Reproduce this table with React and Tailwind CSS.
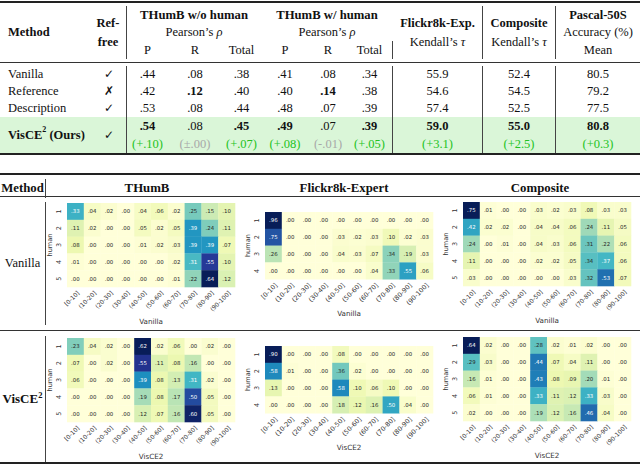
import clsx from 'clsx'

// top table columns: method | ref-free | thumb w/o (P R Total) | thumb w/ (P R Total) | flickr | composite | pascal
const COLS = 'grid grid-cols-[90px_37px_41px_54px_39px_48px_38px_46px_90px_73px_84px]'
const LINE = 'border-r border-[#444]'

const rows = [
  { name: 'Vanilla', ref: '✓', vals: ['.44', '.08', '.38', '.41', '.08', '.34', '55.9', '52.4', '80.5'], bold: [] },
  { name: 'Reference', ref: '✗', vals: ['.42', '.12', '.40', '.40', '.14', '.38', '54.6', '54.5', '79.2'], bold: [1, 4] },
  { name: 'Description', ref: '✓', vals: ['.53', '.08', '.44', '.48', '.07', '.39', '57.4', '52.5', '77.5'], bold: [] },
]

const ours = ['.54', '.08', '.45', '.49', '.07', '.39', '59.0', '55.0', '80.8']
const oursBold = [0, 2, 3, 5, 6, 7, 8]
const deltas = ['(+.10)', '(±.00)', '(+.07)', '(+.08)', '(-.01)', '(+.05)', '(+3.1)', '(+2.5)', '(+0.3)']

const YLGNBU = ['#ffffd9', '#edf8b1', '#c7e9b4', '#7fcdbb', '#41b6c4', '#1d91c0', '#225ea8', '#253494', '#081d58']

function hex(c) {
  return [1, 3, 5].map(i => parseInt(c.slice(i, i + 2), 16))
}

function cmap(t) {
  const x = Math.max(0, Math.min(1, t)) * 8
  const i = Math.min(7, Math.floor(x))
  const f = x - i
  const a = hex(YLGNBU[i])
  const b = hex(YLGNBU[i + 1])
  const c = a.map((v, k) => Math.round(v + (b[k] - v) * f))
  return `rgb(${c[0]},${c[1]},${c[2]})`
}

const BINS = ['[0-10]', '(10-20]', '(20-30]', '(30-40]', '(40-50]', '(50-60]', '(60-70]', '(70-80]', '(80-90]', '(90-100]']

const fmt = v => '.' + String(Math.round(v * 100)).padStart(2, '0')

function Heatmap({ data, w, h, gx, gy, xlabel, tick = 6 }) {
  const cw = 16.8
  const ch = 16.8
  const max = Math.max(...data.flat())
  const bottom = gy + data.length * ch
  const mid = gy + (data.length * ch) / 2
  return (
    <svg width={w} height={h} className="block overflow-visible font-['DejaVu_Sans',sans-serif]">
      {data.map((row, i) =>
        row.map((v, j) => {
          const t = v / max
          return (
            <g key={`${i}-${j}`}>
              <rect x={gx + j * cw} y={gy + i * ch} width={cw + 0.3} height={ch + 0.3} fill={cmap(t)} />
              <text
                x={gx + (j + 0.5) * cw}
                y={gy + (i + 0.5) * ch}
                fontSize="5.4"
                textAnchor="middle"
                dominantBaseline="central"
                fill={t > 0.47 ? '#ffffff' : '#262626'}
              >
                {fmt(v)}
              </text>
            </g>
          )
        })
      )}
      {data.map((_, i) => {
        const y = gy + (i + 0.5) * ch
        return (
          <text key={i} x={gx - 8} y={y} fontSize="6.5" textAnchor="middle" dominantBaseline="central" fill="#333" transform={`rotate(-90 ${gx - 8} ${y})`}>
            {i + 1}
          </text>
        )
      })}
      <text x={gx - 17} y={mid} fontSize="6.6" textAnchor="middle" dominantBaseline="central" fill="#333" transform={`rotate(-90 ${gx - 17} ${mid})`}>
        human
      </text>
      {BINS.map((b, j) => {
        const x = gx + (j + 0.5) * cw + 1
        const y = bottom + 3
        return (
          <text key={b} x={x} y={y} fontSize={tick} textAnchor="end" dominantBaseline="hanging" fill="#333" transform={`rotate(-45 ${x} ${y})`}>
            {b}
          </text>
        )
      })}
      <text x={gx + 5 * cw} y={bottom + 34} fontSize="7.2" textAnchor="middle" dominantBaseline="central" fill="#333">
        {xlabel}
      </text>
    </svg>
  )
}

const thumbVanilla = [
  [0.33, 0.04, 0.02, 0, 0.04, 0.06, 0.02, 0.25, 0.15, 0.1],
  [0.11, 0.02, 0, 0, 0.05, 0.02, 0.05, 0.39, 0.24, 0.11],
  [0.08, 0, 0, 0, 0.01, 0.02, 0.03, 0.39, 0.39, 0.07],
  [0.01, 0, 0, 0, 0, 0, 0.02, 0.31, 0.55, 0.1],
  [0, 0, 0, 0, 0, 0, 0.01, 0.22, 0.64, 0.12],
]
const flickrVanilla = [
  [0.96, 0, 0, 0, 0, 0, 0, 0, 0, 0],
  [0.75, 0, 0, 0, 0.03, 0.02, 0.03, 0.1, 0.02, 0.03],
  [0.26, 0, 0, 0, 0.04, 0.03, 0.07, 0.34, 0.19, 0.03],
  [0, 0, 0, 0, 0, 0, 0.04, 0.33, 0.55, 0.06],
]
const compVanilla = [
  [0.75, 0.01, 0, 0, 0.03, 0.02, 0.03, 0.08, 0.03, 0.03],
  [0.42, 0.02, 0.02, 0, 0.04, 0.04, 0.06, 0.24, 0.11, 0.05],
  [0.24, 0, 0.01, 0, 0.04, 0.03, 0.06, 0.31, 0.22, 0.06],
  [0.11, 0, 0, 0, 0.02, 0.02, 0.05, 0.34, 0.37, 0.06],
  [0.03, 0, 0, 0, 0, 0, 0.03, 0.32, 0.53, 0.07],
]
const thumbOurs = [
  [0.23, 0.04, 0.02, 0, 0.62, 0.02, 0.06, 0, 0.02, 0],
  [0.07, 0, 0.02, 0, 0.55, 0.11, 0.08, 0.16, 0, 0],
  [0.06, 0, 0, 0, 0.39, 0.08, 0.13, 0.31, 0.02, 0],
  [0, 0, 0, 0, 0.19, 0.08, 0.17, 0.5, 0.05, 0],
  [0, 0, 0, 0, 0.12, 0.07, 0.16, 0.6, 0.05, 0],
]
const flickrOurs = [
  [0.9, 0, 0, 0, 0.08, 0, 0, 0, 0, 0],
  [0.58, 0.01, 0, 0, 0.36, 0.02, 0, 0, 0, 0],
  [0.13, 0, 0, 0, 0.58, 0.1, 0.06, 0.1, 0, 0],
  [0, 0, 0, 0, 0.18, 0.12, 0.16, 0.5, 0.04, 0],
]
const compOurs = [
  [0.64, 0.02, 0, 0, 0.28, 0.02, 0.01, 0.02, 0, 0],
  [0.29, 0.03, 0, 0, 0.44, 0.07, 0.04, 0.11, 0, 0],
  [0.16, 0.01, 0, 0, 0.43, 0.08, 0.09, 0.2, 0.01, 0],
  [0.06, 0.01, 0, 0, 0.33, 0.11, 0.12, 0.33, 0.03, 0],
  [0.02, 0, 0, 0, 0.19, 0.12, 0.16, 0.46, 0.04, 0],
]

const Check = ({ mark }) => <span className="font-['DejaVu_Sans',sans-serif] text-[12px]">{mark}</span>

function MethodCell({ children, last }) {
  return (
    <div className={clsx('flex flex-col', last ? 'pt-[5px]' : 'py-[5px]')}>
      <div className={clsx('flex-1 flex items-center justify-center', LINE)}>{children}</div>
    </div>
  )
}

export default function App() {
  return (
    <div className="w-[640px] h-[465px] bg-white text-[#111] font-['Liberation_Serif',serif] text-[12.5px] overflow-hidden">
      {/* results table */}
      <div className="pt-[1px]">
        <div className="h-[2px] bg-[#222]" />
        <div className={clsx(COLS, 'mt-[3px] grid-rows-[18px_17px_18px] leading-[17px]')}>
          <div className="row-span-3 flex items-center pl-[8px] font-bold">Method</div>
          <div className={clsx('row-span-3 flex flex-col items-center justify-center font-bold leading-[19px]', LINE)}>
            <span>Ref-</span>
            <span>free</span>
          </div>
          <div className="col-span-3 flex items-center justify-center font-bold text-[12.7px]">THumB w/o human</div>
          <div className="col-span-3 flex items-center justify-center font-bold text-[12.7px]">THumB w/ human</div>
          <div className={clsx('row-span-3 flex flex-col items-center justify-center leading-[19px]', LINE)}>
            <span className="font-bold">Flickr8k-Exp.</span>
            <span>
              Kendall’s <i>τ</i>
            </span>
          </div>
          <div className={clsx('row-span-3 flex flex-col items-center justify-center leading-[19px]', LINE)}>
            <span className="font-bold">Composite</span>
            <span>
              Kendall’s <i>τ</i>
            </span>
          </div>
          <div className="flex items-center justify-center font-bold">Pascal-50S</div>
          <div className="col-start-3 col-span-3 flex items-center justify-center">
            Pearson’s&nbsp;<i>ρ</i>
          </div>
          <div className="col-span-3 flex items-center justify-center">
            Pearson’s&nbsp;<i>ρ</i>
          </div>
          <div className="col-start-11 flex items-center justify-center">Accuracy (%)</div>
          {['P', 'R', 'Total', 'P', 'R', 'Total'].map((h, i) => (
            <div key={i} className={clsx('flex items-center justify-center', i === 0 && 'col-start-3', i === 5 && LINE)}>
              {h}
            </div>
          ))}
          <div className="col-start-11 flex items-center justify-center">Mean</div>
        </div>
        <div className="mt-[3px] h-[1px] bg-[#333]" />
        <div className="mt-[3px]">
          {rows.map(r => (
            <div key={r.name} className={clsx(COLS, 'h-[17px] leading-[17px]')}>
              <div className="pl-[8px]">{r.name}</div>
              <div className={clsx('flex items-center justify-center pl-[2px]', LINE)}>
                <Check mark={r.ref} />
              </div>
              {r.vals.map((v, i) => (
                <div key={i} className={clsx('text-center', r.bold.includes(i) && 'font-bold', i >= 5 && i <= 7 && LINE)}>
                  {v}
                </div>
              ))}
            </div>
          ))}
          <div className={clsx(COLS, 'grid-rows-[18px_18px] bg-[#daf6d8] leading-[18px]')}>
            <div className="row-span-2 flex items-center pl-[8px] font-bold">
              VisCE<sup className="text-[8px] -top-[5px]">2</sup>&nbsp;(Ours)
            </div>
            <div className={clsx('row-span-2 flex items-center justify-center pl-[2px]', LINE)}>
              <Check mark="✓" />
            </div>
            {ours.map((v, i) => (
              <div key={i} className={clsx('text-center', oursBold.includes(i) && 'font-bold', i >= 5 && i <= 7 && LINE)}>
                {v}
              </div>
            ))}
            {deltas.map((d, i) => (
              <div
                key={i}
                className={clsx(
                  'text-center',
                  i === 0 && 'col-start-3',
                  d.startsWith('(+') ? 'text-[#22c322]' : 'text-[#a8a8a8]',
                  i >= 5 && i <= 7 && LINE
                )}
              >
                {d}
              </div>
            ))}
          </div>
        </div>
        <div className="h-[2px] bg-[#222]" />
      </div>

      {/* score distribution heatmaps */}
      <div className="mt-[18px]">
        <div className="h-[2px] bg-[#222]" />
        <div className="grid grid-cols-[46px_202px_192px_200px] h-[21px] font-bold text-[12.8px]">
          <div className="flex flex-col py-[4px]">
            <div className={clsx('flex-1 flex items-center justify-center', LINE)}>Method</div>
          </div>
          <div className="flex items-center justify-center">THumB</div>
          <div className="flex items-center justify-center">Flickr8k-Expert</div>
          <div className="flex items-center justify-center">Composite</div>
        </div>
        <div className="h-[1px] bg-[#333]" />
        <div className="grid grid-cols-[46px_202px_192px_200px] h-[133px]">
          <MethodCell>Vanilla</MethodCell>
          <Heatmap data={thumbVanilla} w={202} h={133} gx={21} gy={6} xlabel="Vanilla" />
          <Heatmap data={flickrVanilla} w={192} h={133} gx={17} gy={15} xlabel="Vanilla" tick={6.5} />
          <Heatmap data={compVanilla} w={200} h={133} gx={23} gy={5} xlabel="Vanilla" />
        </div>
        <div className="h-[1px] bg-[#333]" />
        <div className="grid grid-cols-[46px_202px_192px_200px] h-[131px]">
          <MethodCell last>
            <span className="font-bold text-[13px]">
              VisCE<sup className="text-[8.5px] -top-[5px]">2</sup>
            </span>
          </MethodCell>
          <Heatmap data={thumbOurs} w={202} h={131} gx={21} gy={7} xlabel="VisCE2" />
          <Heatmap data={flickrOurs} w={192} h={131} gx={17} gy={15} xlabel="VisCE2" tick={6.5} />
          <Heatmap data={compOurs} w={200} h={131} gx={23} gy={6} xlabel="VisCE2" />
        </div>
        <div className="h-[2px] bg-[#222]" />
      </div>
    </div>
  )
}
